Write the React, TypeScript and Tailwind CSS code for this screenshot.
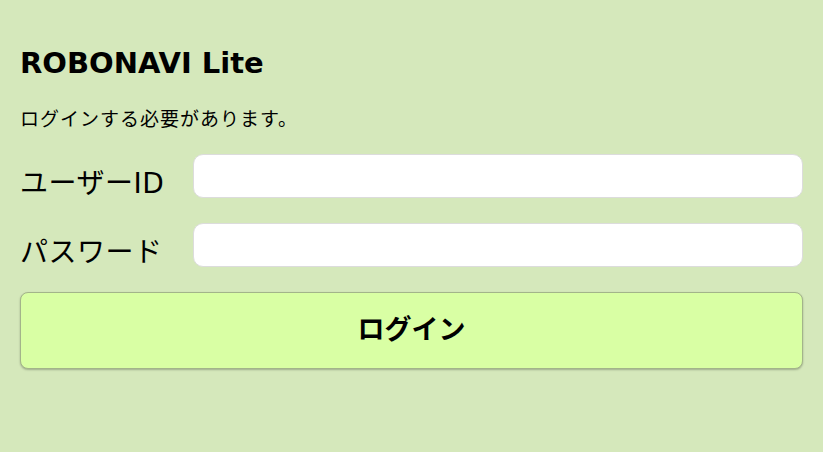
export default function App() {
  const font = { fontFamily: '"DejaVu Sans", "Noto Sans CJK JP", sans-serif' };
  return (
    <div
      className="min-h-[452px] bg-[#d5e8bb] px-5 pt-[39px] text-black"
      style={font}
    >
      <h1 className="text-[29px] font-bold leading-[48px]">ROBONAVI Lite</h1>
      <p className="mt-[20px] text-[19px] leading-[24px] tracking-[1px]">ログインする必要があります。</p>
      <form className="mt-[23px] flex flex-col" onSubmit={(e) => e.preventDefault()}>
        <div className="flex items-start">
          <label className="h-[44px] w-[173px] pt-[15px] text-[28px] leading-[29px] tracking-[0.5px]">ユーザーID</label>
          <input
            type="text"
            className="h-[44px] flex-1 rounded-[10px] border border-[#dcdcdc] bg-white px-3 text-[20px] outline-none"
          />
        </div>
        <div className="mt-[25px] flex items-start">
          <label className="h-[44px] w-[173px] pt-[15px] text-[28px] leading-[29px] tracking-[0.5px]">パスワード</label>
          <input
            type="password"
            className="h-[44px] flex-1 rounded-[10px] border border-[#dcdcdc] bg-white px-3 text-[20px] outline-none"
          />
        </div>
        <button
          type="submit"
          className="mt-[25px] h-[77px] w-full rounded-[8px] border border-[#a3b48a] bg-[#d9ffa4] text-[27px] font-bold shadow-[0_1px_2px_rgba(0,0,0,0.25)]"
        >
          ログイン
        </button>
      </form>
    </div>
  );
}
